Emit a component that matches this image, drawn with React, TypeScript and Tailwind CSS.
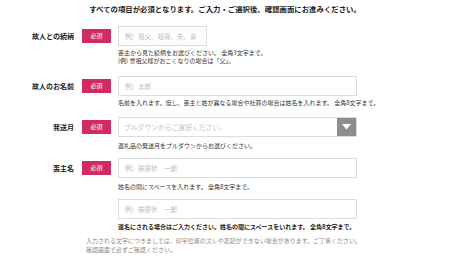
import React from "react";

const font = { fontFamily: '"Noto Sans CJK JP", "Noto Sans", sans-serif' };

function Badge() {
  return (
    <div className="flex h-[14px] w-[29px] shrink-0 items-center justify-center bg-[#d02c63] text-[6px] leading-none text-white">
      必須
    </div>
  );
}

function Label({ text }: { text: string }) {
  return (
    <div className="w-[75px] shrink-0 pr-[1px] text-right text-[7px] font-bold leading-none text-[#222]">
      {text}
    </div>
  );
}

function TextBox({ placeholder, w }: { placeholder: string; w: string }) {
  return (
    <input
      readOnly
      placeholder={placeholder}
      className={`${w} h-[20px] border border-[#dcdcdc] bg-white px-[6px] text-[6.5px] leading-none outline-none placeholder:text-[#bdbdbd]`}
    />
  );
}

export default function App() {
  return (
    <div className="relative h-[271px] w-[450px] overflow-hidden bg-white pt-[4px]" style={font}>
      <div className="h-[10px] text-center text-[7.4px] font-bold leading-[10px] text-[#222]">
        すべての項目が必須となります。ご入力・ご選択後、確認画面にお進みください。
      </div>

      {/* Row 1 */}
      <div className="mt-[12px] flex items-start">
        <div className="flex h-[20px] items-center gap-[7px]">
          <Label text="故人との続柄" />
          <Badge />
        </div>
        <div className="ml-[7px] flex flex-col">
          <TextBox w="w-[89px]" placeholder="例）祖父、祖母、夫、妻" />
          <div className="mt-[3px] text-[6px] leading-[8px] text-[#333]">
            <div>喪主から見た続柄をお選びください。 全角3文字まで。</div>
            <div>(例) 曾祖父様がおこくなりの場合は「父」。</div>
          </div>
        </div>
      </div>

      {/* Row 2 */}
      <div className="mt-[11px] flex items-start">
        <div className="flex h-[20px] items-center gap-[7px]">
          <Label text="故人のお名前" />
          <Badge />
        </div>
        <div className="ml-[7px] flex flex-col">
          <TextBox w="w-[239px]" placeholder="例）太郎" />
          <div className="mt-[3px] whitespace-nowrap text-[6px] leading-[8px] text-[#333]">
            名前を入れます。但し、喪主と姓が異なる場合や社葬の場合は姓名を入れます。 全角8文字まで。
          </div>
        </div>
      </div>

      {/* Row 3 */}
      <div className="mt-[10px] flex items-start">
        <div className="flex h-[20px] items-center gap-[7px]">
          <Label text="発送月" />
          <Badge />
        </div>
        <div className="ml-[7px] flex flex-col">
          <div className="flex h-[20px] w-[239px] items-stretch border border-[#dcdcdc] bg-white">
            <div className="flex flex-1 items-center pl-[5px] text-[6.8px] leading-none text-[#c4c4c4]">
              プルダウンからご選択ください。
            </div>
            <div className="flex w-[19px] items-center justify-center bg-[#8d8d8d]">
              <svg width="9" height="6" viewBox="0 0 9 6">
                <polygon points="0,0 9,0 4.5,5.5" fill="#ffffff" />
              </svg>
            </div>
          </div>
          <div className="mt-[5px] text-[6px] leading-[8px] text-[#333]">
            返礼品の発送月をプルダウンからお選びください。
          </div>
        </div>
      </div>

      {/* Row 4 */}
      <div className="mt-[8px] flex items-start">
        <div className="flex h-[20px] items-center gap-[7px]">
          <Label text="喪主名" />
          <Badge />
        </div>
        <div className="ml-[7px] flex flex-col">
          <TextBox w="w-[239px]" placeholder="例）挨拶状　一郎" />
          <div className="mt-[5px] text-[6px] leading-[8px] text-[#333]">
            姓名の間にスペースを入れます。 全角8文字まで。
          </div>
        </div>
      </div>

      {/* Row 5 */}
      <div className="mt-[8px] flex items-start pl-[118px]">
        <div className="flex flex-col">
          <TextBox w="w-[239px]" placeholder="例）挨拶状　一郎" />
          <div className="mt-[4px] whitespace-nowrap text-[6px] font-bold leading-[8px] text-[#222]">
            連名にされる場合はご入力ください。姓名の間にスペースをいれます。 全角8文字まで。
          </div>
        </div>
      </div>

      {/* Footer */}
      <div className="mt-[6px] pl-[86px] text-[6px] leading-[8.5px] text-[#8a8a8a]">
        <div className="whitespace-nowrap">
          入力される文字につきましては、印字位置のズレや表記ができない場合があります。ご了承ください。
        </div>
        <div>確認画面で必ずご確認ください。</div>
      </div>
    </div>
  );
}
